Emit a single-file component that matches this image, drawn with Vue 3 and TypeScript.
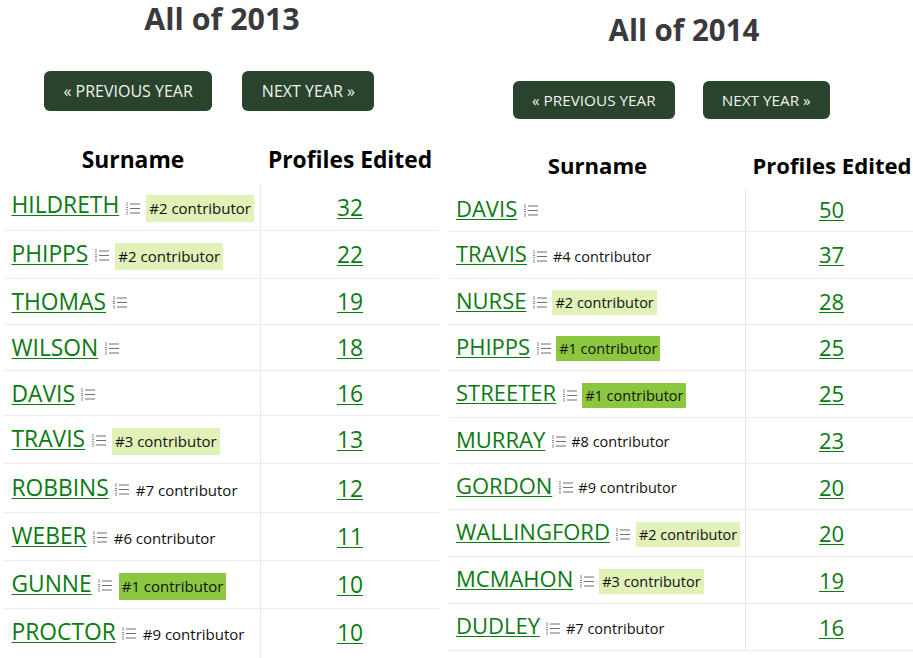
<script setup lang="ts">
interface Row { name: string; count: number; rank?: number; h: number }
interface Year { year: number; cls: string; rows: Row[] }
const years: Year[] = [
  { year: 2013, cls: 'y13', rows: [
    { name: 'HILDRETH', count: 32, rank: 2, h: 47 },
    { name: 'PHIPPS', count: 22, rank: 2, h: 48 },
    { name: 'THOMAS', count: 19, h: 46 },
    { name: 'WILSON', count: 18, h: 46 },
    { name: 'DAVIS', count: 16, h: 45 },
    { name: 'TRAVIS', count: 13, rank: 3, h: 48 },
    { name: 'ROBBINS', count: 12, rank: 7, h: 49 },
    { name: 'WEBER', count: 11, rank: 6, h: 48 },
    { name: 'GUNNE', count: 10, rank: 1, h: 48 },
    { name: 'PROCTOR', count: 10, rank: 9, h: 50 },
  ] },
  { year: 2014, cls: 'y14', rows: [
    { name: 'DAVIS', count: 50, h: 44 },
    { name: 'TRAVIS', count: 37, rank: 4, h: 47 },
    { name: 'NURSE', count: 28, rank: 2, h: 46 },
    { name: 'PHIPPS', count: 25, rank: 1, h: 46 },
    { name: 'STREETER', count: 25, rank: 1, h: 47 },
    { name: 'MURRAY', count: 23, rank: 8, h: 46 },
    { name: 'GORDON', count: 20, rank: 9, h: 46 },
    { name: 'WALLINGFORD', count: 20, rank: 2, h: 47 },
    { name: 'MCMAHON', count: 19, rank: 3, h: 47 },
    { name: 'DUDLEY', count: 16, rank: 7, h: 47 },
  ] },
]
function badge(rank?: number): string {
  if (rank === 1) return 'top'
  if (rank === 2 || rank === 3) return 'high'
  return ''
}
</script>

<template>
  <div class="page">
    <section v-for="y in years" :key="y.year" class="col" :class="y.cls">
      <h2>All of {{ y.year }}</h2>
      <div class="btns">
        <a class="btn">« PREVIOUS YEAR</a>
        <a class="btn">NEXT YEAR »</a>
      </div>
      <div class="head">
        <div>Surname</div>
        <div>Profiles Edited</div>
      </div>
      <div v-for="r in y.rows" :key="r.name" class="row" :class="{ plain: !r.rank }" :style="{ height: r.h + 'px' }">
        <div class="name">
          <a class="link">{{ r.name }}</a>
          <svg class="ico" viewBox="0 0 15 15" width="15" height="15" aria-hidden="true">
            <path d="M5 3h10M5 7.500h10M5 12h10" stroke="#6f6f6f" stroke-width="1.2" fill="none" />
            <path d="M1 2h2M1 4h2M1 6.500h2M1 8.500h2M1 11h2M1 13h2" stroke="#8a8a8a" stroke-width="1" fill="none" />
          </svg>
          <span v-if="r.rank" class="tag" :class="badge(r.rank)">#{{ r.rank }} contributor</span>
        </div>
        <div class="num"><a class="link">{{ r.count }}</a></div>
      </div>
    </section>
  </div>
</template>

<style scoped>
.page {
  display: grid;
  grid-template-columns: 449px 464px;
  width: 913px;
  height: 658px;
  overflow: hidden;
  font-family: "Open Sans", sans-serif;
  background: #fff;
}
h2 {
  margin: 0;
  text-align: center;
  font-weight: 700;
  color: #3a3a3c;
}
.y13 h2 { font-size: 30.400px; line-height: 38px; width: 444px; margin-bottom: 2px; }
.y14 h2 { font-size: 29.500px; line-height: 40px; padding-top: 10px; padding-bottom: 1px; width: 470px; }
.btns { display: flex; }
.y13 .btns { padding: 31px 0 0 44px; gap: 30px; }
.y14 .btns { padding: 30px 0 0 64px; gap: 28px; }
.btn {
  display: flex;
  align-items: center;
  justify-content: center;
  background: #29432d;
  color: #f2f4ee;
  border-radius: 6px;
  box-sizing: border-box;
}
.y13 .btn { height: 40px; font-size: 16px; padding: 0 19.500px; }
.y14 .btn { height: 38px; font-size: 15.300px; padding: 0 19px; }
.head {
  display: grid;
  font-weight: 700;
  color: #000;
  text-align: center;
}
.y13 .head { grid-template-columns: 266px 168px; font-size: 22.800px; padding-top: 25px; line-height: 48px; }
.y14 .head { grid-template-columns: 297px 172px; font-size: 22.100px; padding-top: 24px; line-height: 45px; }
.row {
  display: grid;
  align-items: center;
  box-sizing: border-box;
  border-bottom: 1px solid #e9edf1;
}
.y13 .row { grid-template-columns: 257px 1fr; margin-left: 4px; width: 435px; }
.y14 .row { grid-template-columns: 297px 1fr; width: 464px; }
.y13 .row:last-child { border-bottom: none; }
.y13 .row:last-child .name,
.y13 .row:last-child .num { padding-bottom: 3px; }
.name {
  display: flex;
  align-items: center;
  height: 100%;
  border-right: 1px solid #e3e8ee;
  box-sizing: border-box;
  white-space: nowrap;
}
.y13 .name { padding-left: 7.500px; }
.y14 .name { padding-left: 7px; }
.link {
  color: #0a7a12;
  text-decoration: underline;
  text-decoration-thickness: 1px;
  text-underline-offset: 2px;
}
.name .link { position: relative; }
.y13 .name .link { font-size: 22.800px; top: -1px; }
.y13 .plain .name .link { top: 0; }
.y13 .row:nth-child(4) .name .link { top: -3px; }
.y14 .name .link { font-size: 22px; top: -2px; }
.num { text-align: center; position: relative; }
.y13 .num { font-size: 22.800px; }
.y14 .num { font-size: 22px; padding-left: 4px; top: -1px; }
.y14 .row:nth-child(n+10) .num { top: 0; }
.ico { margin-left: 5.500px; flex: none; position: relative; top: 1px; }
.tag {
  margin-left: 6.500px;
  font-size: 15px;
  line-height: 27px;
  color: #111;
  position: relative;
}
.y13 .tag { top: 2px; }
.y13 .row:nth-child(4) .tag { top: 1px; }
.y14 .tag { font-size: 14.500px; line-height: 25px; top: 1px; margin-left: 5.500px; }
.high, .top { padding: 0 3px; }
.high { background: #e0f2b8; }
.top { background: #8cc83f; }
</style>
